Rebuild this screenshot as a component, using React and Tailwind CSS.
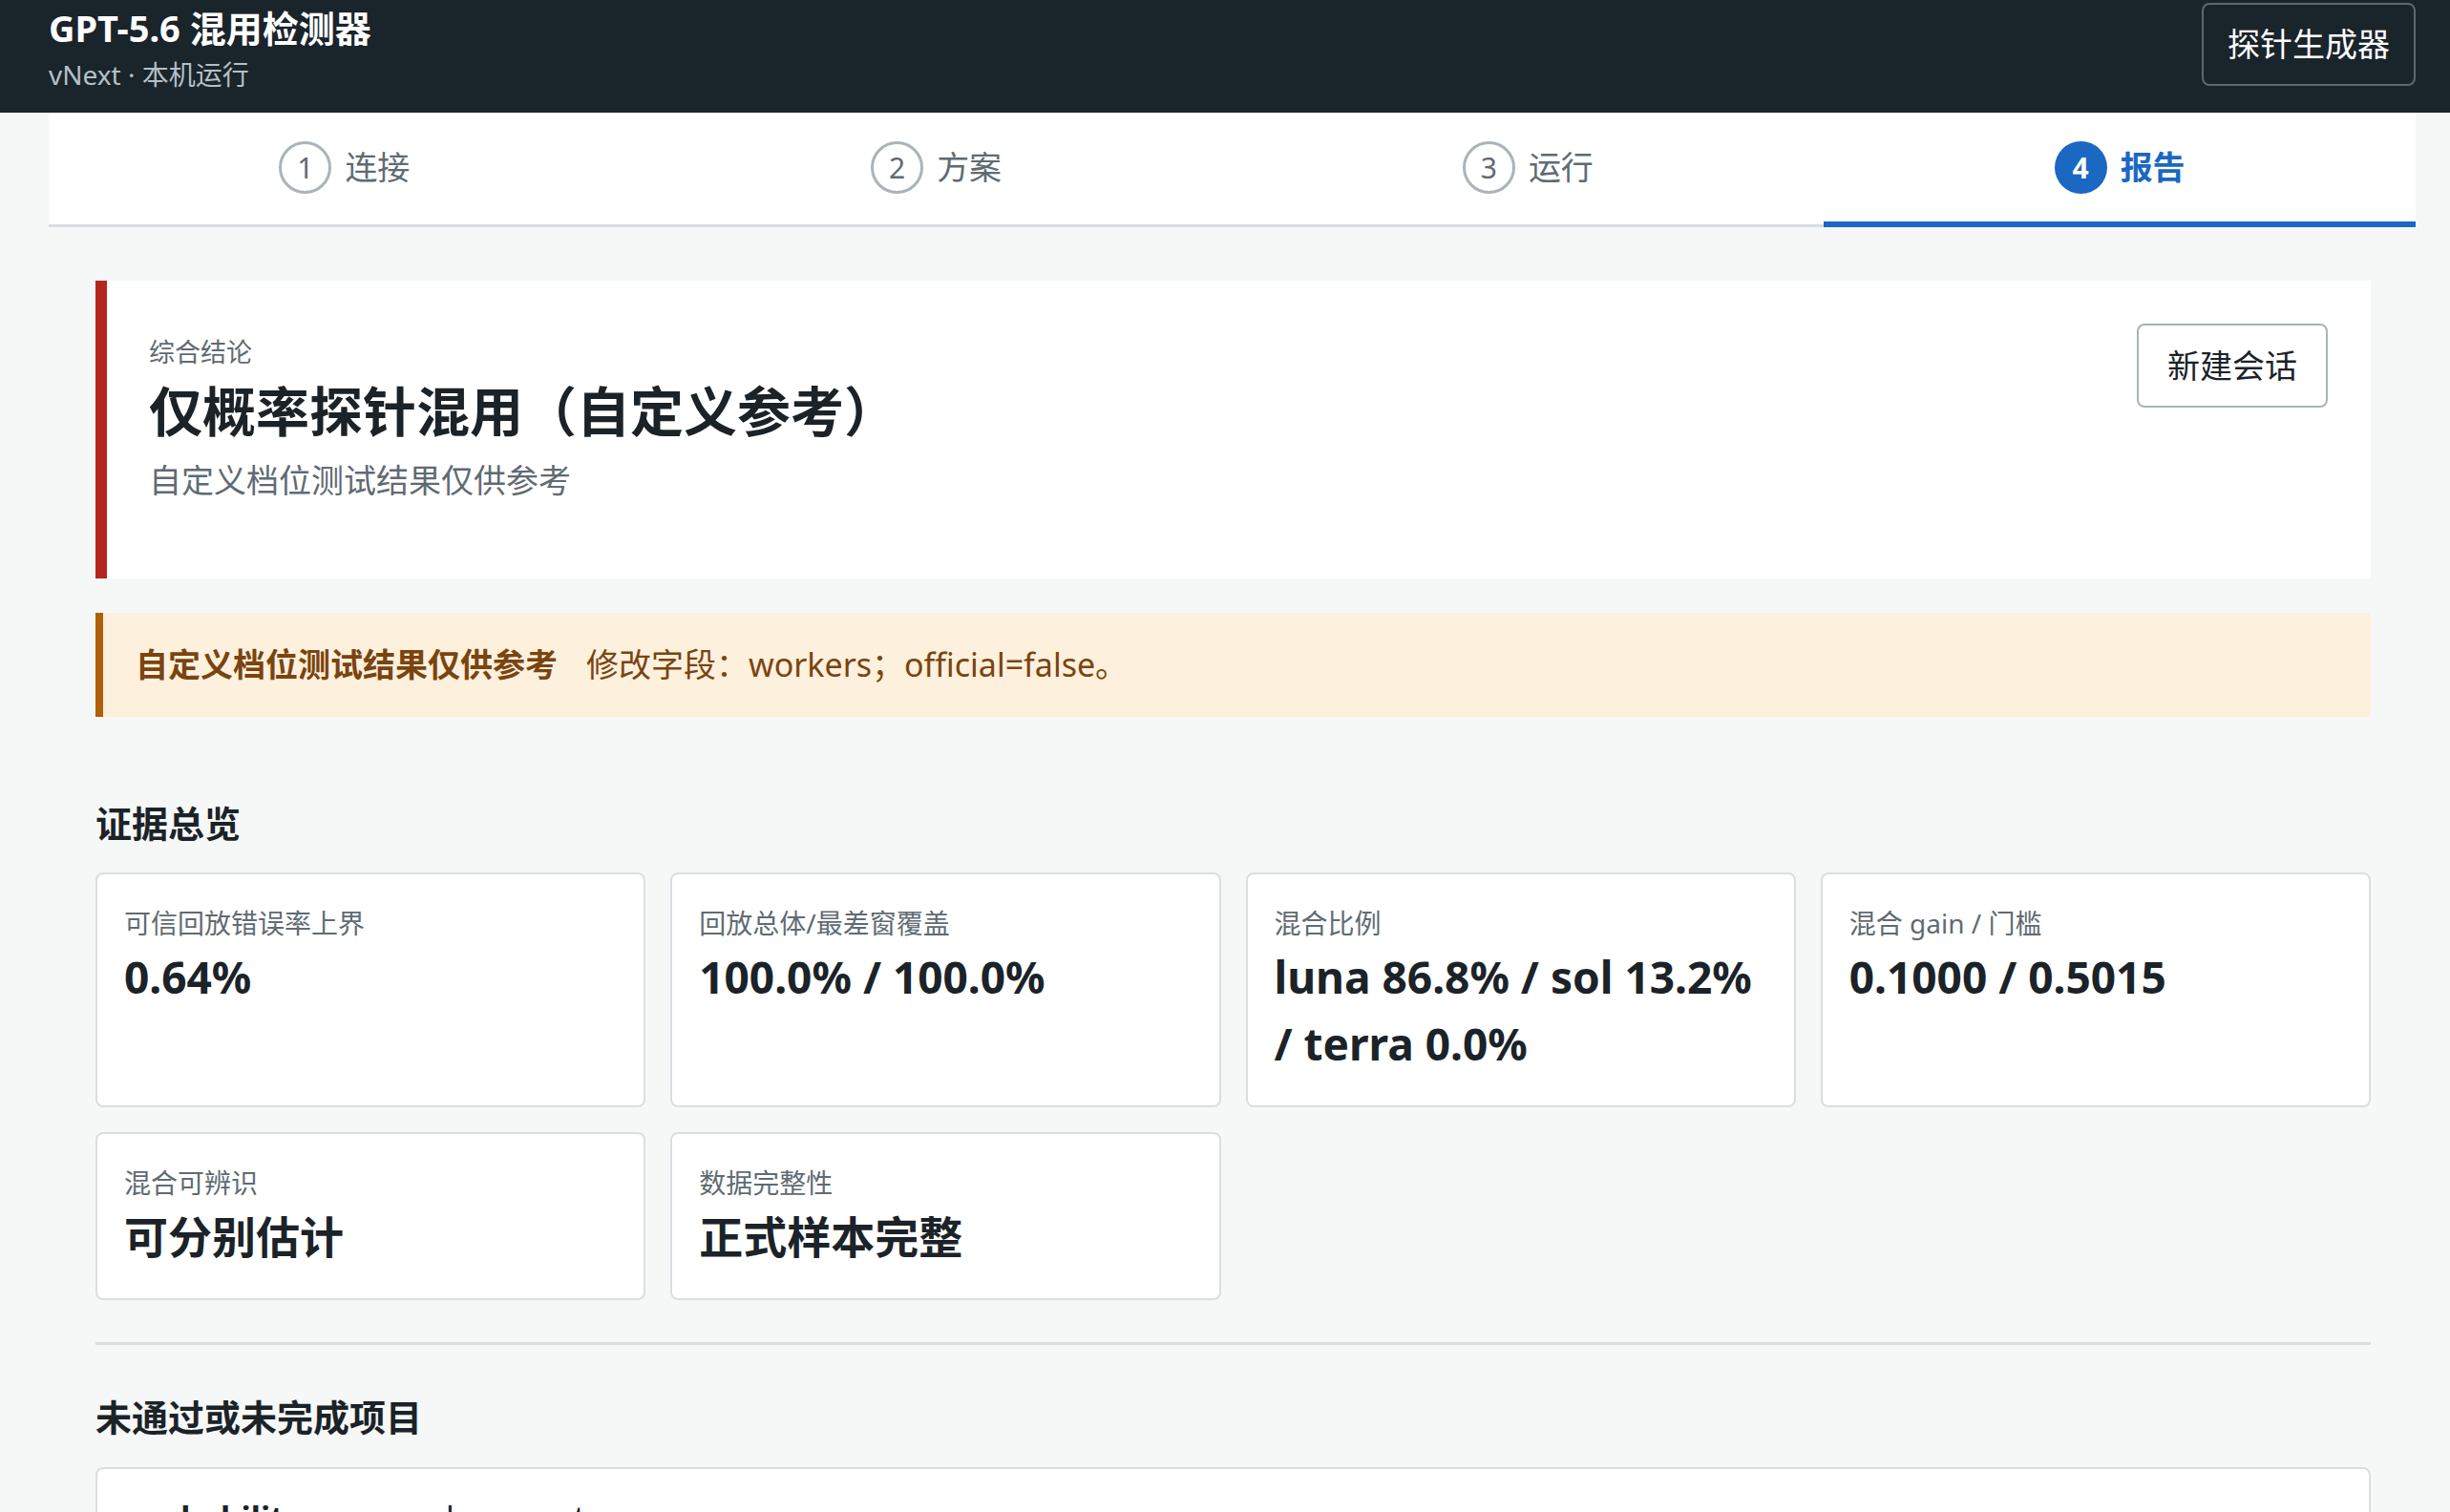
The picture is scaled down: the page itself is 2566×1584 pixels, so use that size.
import React from 'react';

// 步骤条
const STEPS = [
  { n: 1, label: '连接' },
  { n: 2, label: '方案' },
  { n: 3, label: '运行' },
  { n: 4, label: '报告', active: true },
];

// 证据总览卡片
const METRICS = [
  { label: '可信回放错误率上界', value: '0.64%' },
  { label: '回放总体/最差窗覆盖', value: '100.0% / 100.0%' },
  { label: '混合比例', value: 'luna 86.8% / sol 13.2% / terra 0.0%' },
  { label: '混合 gain / 门槛', value: '0.1000 / 0.5015' },
  { label: '混合可辨识', value: '可分别估计' },
  { label: '数据完整性', value: '正式样本完整' },
];

function Header() {
  return (
    <header className="h-[118px] bg-[#1a242b]">
      <div className="ml-[51px] flex w-[2479px] items-start justify-between">
        <div className="pt-[5px]">
          <h1 className="text-[38px] font-bold leading-[48px] text-white">GPT-5.6 混用检测器</h1>
          <p className="mt-[5px] text-[28px] leading-[40px] text-[#b4c0c6]">vNext · 本机运行</p>
        </div>
        <button className="mt-[3px] h-[87px] rounded-[8px] border-2 border-[#5b6870] px-[25px] text-[34px] text-white">
          探针生成器
        </button>
      </div>
    </header>
  );
}

function Steps() {
  return (
    <nav className="ml-[51px] flex w-[2479px] border-b-[3px] border-[#d8dde0] bg-white">
      {STEPS.map((s) => (
        <div key={s.n} className="relative flex h-[117px] flex-1 items-center justify-center gap-[14px] pb-[3px]">
          {s.active ? (
            <span className="flex h-[55px] w-[55px] items-center justify-center rounded-full bg-[#1a68c2] text-[30px] font-bold text-white">
              {s.n}
            </span>
          ) : (
            <span className="flex h-[55px] w-[55px] items-center justify-center rounded-full border-[3px] border-[#a9b4ba] text-[30px] text-[#5f6b73]">
              {s.n}
            </span>
          )}
          <span className={s.active ? 'text-[34px] font-bold text-[#1a68c2]' : 'text-[34px] text-[#5f6b73]'}>
            {s.label}
          </span>
          {s.active && <span className="absolute bottom-[-3px] left-0 right-0 h-[6px] bg-[#1a68c2]" />}
        </div>
      ))}
    </nav>
  );
}

function MetricCard({ label, value }) {
  return (
    <div className="rounded-[8px] border-2 border-[#d9dee1] bg-white px-[28px] pb-[30px] pt-[30px]">
      <div className="text-[28px] leading-[42px] text-[#5f6b73]">{label}</div>
      <div className="text-[46px] font-bold leading-[70px] text-[#1b2328]">{value}</div>
    </div>
  );
}

export default function App() {
  return (
    <div className="min-h-screen bg-[#f6f7f7] font-['Noto_Sans','Noto_Sans_CJK_SC',sans-serif] text-[#1b2328]">
      <Header />
      <Steps />

      <main className="ml-[51px] w-[2479px] pb-[60px] pl-[49px] pr-[47px] pt-[56px]">
        {/* 综合结论 */}
        <section className="flex h-[312px] justify-between border-l-[12px] border-[#b3261e] bg-white pl-[44px] pr-[45px] pt-[45px]">
          <div>
            <div className="mt-[8px] text-[27px] leading-[44px] text-[#5f6b73]">综合结论</div>
            <h2 className="mt-[4px] text-[56px] font-bold leading-[70px]">仅概率探针混用（自定义参考）</h2>
            <p className="mt-[14px] text-[34px] leading-[48px] text-[#5f6b73]">自定义档位测试结果仅供参考</p>
          </div>
          <button className="h-[88px] rounded-[8px] border-2 border-[#a9b3b8] bg-white px-[30px] text-[34px] text-[#1b2328]">
            新建会话
          </button>
        </section>

        {/* 提示条 */}
        <div className="mt-[36px] flex h-[109px] items-center border-l-[8px] border-[#b0600b] bg-[#fdf0dc] pl-[34px] text-[34px] text-[#7a4410]">
          <span className="font-bold">自定义档位测试结果仅供参考</span>
          <span className="ml-[30px]">修改字段：workers；official=false。</span>
        </div>

        <h3 className="mt-[86px] text-[38px] font-bold leading-[50px]">证据总览</h3>
        <div className="mt-[27px] grid grid-cols-4 gap-[26px]">
          {METRICS.map((m) => (
            <MetricCard key={m.label} label={m.label} value={m.value} />
          ))}
        </div>

        <hr className="mt-[44px] border-t-[3px] border-[#d9dee1]" />

        <h3 className="mt-[50px] text-[38px] font-bold leading-[50px]">未通过或未完成项目</h3>
        <div className="mt-[28px] rounded-[8px] border-2 border-[#d9dee1] bg-white px-[30px] pb-[30px] pt-[26px]">
          <div className="flex text-[34px] leading-[51px]">
            <span className="w-[335px] font-bold">probability</span>
            <span className="text-[#1b2328]">loocv_est</span>
          </div>
          <div className="h-[200px]" />
        </div>
      </main>
    </div>
  );
}
